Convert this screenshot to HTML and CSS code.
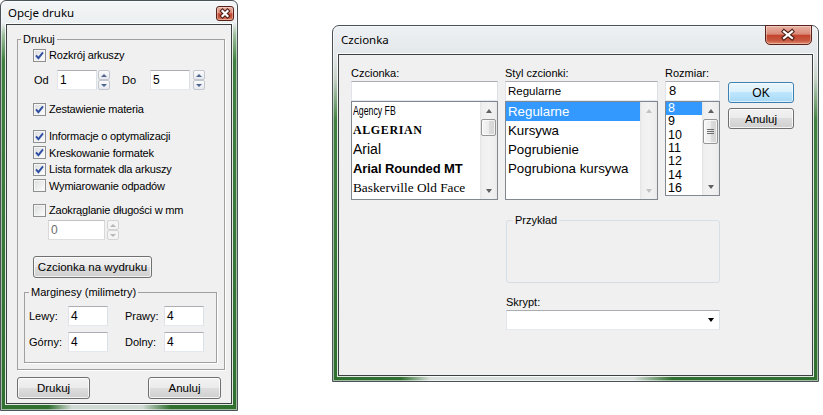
FILE: index.html
```html
<!DOCTYPE html>
<html lang="pl">
<head>
<meta charset="utf-8">
<title>Opcje druku</title>
<link rel="stylesheet" href="styles.css">
</head>
<body>
<div class="desk">

  <section class="win win-print">
    <header class="titlebar">
      <span class="title">Opcje druku</span>
      <span class="close close-sm"><svg width="18" height="15" viewBox="0 0 18 15"><path class="x-out" d="M6.5 5 L11.5 10 M6.5 10 L11.5 5"/><path class="x-in" d="M6.5 5 L11.5 10 M6.5 10 L11.5 5"/></svg></span>
    </header>
    <div class="client pclient">
      <fieldset class="etched g-print">
        <legend>Drukuj</legend>
        <div class="chk"><span class="cb"><svg viewBox="0 0 11 11"><path d="M2 5.4 L4.4 8.2 L9 2.4"/></svg></span>Rozkrój arkuszy</div>
        <div class="range">
          <span class="lbl lbl-od">Od</span>
          <span class="edit e40">1</span>
          <span class="spin"><span class="sp"><i class="up"></i></span><span class="sp"><i class="dn"></i></span></span>
          <span class="lbl lbl-do">Do</span>
          <span class="edit e40">5</span>
          <span class="spin spin2"><span class="sp"><i class="up"></i></span><span class="sp"><i class="dn"></i></span></span>
        </div>
        <div class="chk mt11"><span class="cb"><svg viewBox="0 0 11 11"><path d="M2 5.4 L4.4 8.2 L9 2.4"/></svg></span>Zestawienie materia</div>
        <div class="chk c16 mt11"><span class="cb"><svg viewBox="0 0 11 11"><path d="M2 5.4 L4.4 8.2 L9 2.4"/></svg></span>Informacje o optymalizacji</div>
        <div class="chk c16"><span class="cb"><svg viewBox="0 0 11 11"><path d="M2 5.4 L4.4 8.2 L9 2.4"/></svg></span>Kreskowanie formatek</div>
        <div class="chk c16"><span class="cb"><svg viewBox="0 0 11 11"><path d="M2 5.4 L4.4 8.2 L9 2.4"/></svg></span>Lista formatek dla arkuszy</div>
        <div class="chk c16"><span class="cb"></span>Wymiarowanie odpadów</div>
        <div class="chk mt8"><span class="cb"></span>Zaokrąglanie długości w mm</div>
        <div class="zrow">
          <span class="edit e57 dis">0</span>
          <span class="spin spin-dis"><span class="sp"><i class="up"></i></span><span class="sp"><i class="dn"></i></span></span>
        </div>
        <button class="btn b-font">Czcionka na wydruku</button>
        <fieldset class="etched g-marg">
          <legend>Marginesy (milimetry)</legend>
          <div class="mrow"><span class="mlbl">Lewy:</span><span class="edit e40">4</span><span class="mlbl ml2">Prawy:</span><span class="edit e40">4</span></div>
          <div class="mrow"><span class="mlbl">Górny:</span><span class="edit e40">4</span><span class="mlbl ml2">Dolny:</span><span class="edit e40">4</span></div>
        </fieldset>
      </fieldset>
      <div class="pbtns"><button class="btn b-72">Drukuj</button><button class="btn b-72">Anuluj</button></div>
    </div>
  </section>

  <section class="win win-font">
    <header class="titlebar tb-font">
      <span class="title">Czcionka</span>
      <span class="close close-lg"><svg width="47" height="20" viewBox="0 0 47 20"><path class="x-out" d="M19 6.5 L27 13 M19 13 L27 6.5"/><path class="x-in" d="M19 6.5 L27 13 M19 13 L27 6.5"/></svg></span>
    </header>
    <div class="client fclient">
      <div class="fgrid">
        <div class="col">
          <div class="flbl">Czcionka:</div>
          <div class="edit fe"></div>
          <div class="lb">
            <div class="items font-items">
              <div class="it"><span class="f-agency">Agency FB</span></div>
              <div class="it"><span class="f-alg">ALGERIAN</span></div>
              <div class="it"><span class="f-arial">Arial</span></div>
              <div class="it"><span class="f-arb">Arial Rounded MT</span></div>
              <div class="it"><span class="f-bask">Baskerville Old Face</span></div>
            </div>
            <div class="sb">
              <span class="arr"><i class="up"></i></span>
              <span class="thumb"></span>
              <span class="fill"></span>
              <span class="arr"><i class="dn"></i></span>
            </div>
          </div>
        </div>
        <div class="col">
          <div class="flbl">Styl czcionki:</div>
          <div class="edit fe">Regularne</div>
          <div class="lb">
            <div class="items style-items">
              <div class="it sel">Regularne</div>
              <div class="it">Kursywa</div>
              <div class="it">Pogrubienie</div>
              <div class="it">Pogrubiona kursywa</div>
            </div>
            <div class="sb sb-dis">
              <span class="arr"><i class="up"></i></span>
              <span class="fill"></span>
              <span class="arr"><i class="dn"></i></span>
            </div>
          </div>
        </div>
        <div class="col">
          <div class="flbl">Rozmiar:</div>
          <div class="edit fe fe-size">8</div>
          <div class="lb lb-size">
            <div class="items size-items">
              <div class="it sel">8</div>
              <div class="it">9</div>
              <div class="it">10</div>
              <div class="it">11</div>
              <div class="it">12</div>
              <div class="it">14</div>
              <div class="it">16</div>
            </div>
            <div class="sb">
              <span class="arr"><i class="up"></i></span>
              <span class="thumb thumb-size"><b class="grip"></b></span>
              <span class="fill"></span>
              <span class="arr"><i class="dn"></i></span>
            </div>
          </div>
        </div>
        <div class="bcol">
          <button class="btn ok">OK</button>
          <button class="btn cancel">Anuluj</button>
        </div>
        <fieldset class="sample"><legend>Przykład</legend></fieldset>
        <div class="script">
          <div class="flbl">Skrypt:</div>
          <div class="combo"><i></i></div>
        </div>
      </div>
    </div>
  </section>

</div>
</body>
</html>
```

FILE: styles.css
```css
* { box-sizing: border-box; }
html, body { margin: 0; padding: 0; }
body {
  width: 823px; height: 415px; overflow: hidden;
  background: #fff;
  font-family: "Liberation Sans", Arial, sans-serif;
  font-size: 11px; color: #000;
}
.desk { display: flex; align-items: flex-start; gap: 94px; }

/* ---------- window frame ---------- */
.win {
  display: flex; flex-direction: column; flex: none;
  border: 1px solid #4a5258;
  border-radius: 6px 6px 0 0;
  background:
    linear-gradient(90deg, rgba(226,229,229,0) 14%, rgba(226,229,229,.95) 20%, rgba(226,229,229,.95) 62%, rgba(226,229,229,0) 70%) left bottom / 100% 7px no-repeat,
    linear-gradient(180deg, #eef1f3 0, #e3e7e9 30px, #c8d3c9 52px, #3f7f3f 95px, #2f6f30 100%);
  box-shadow: inset 0 0 0 1px rgba(255,255,255,.55);
}
.win-print {
  width: 238px; height: 411px;
  background:
    linear-gradient(90deg, rgba(226,229,229,0) 20%, rgba(226,229,229,.9) 30%, rgba(226,229,229,.9) 60%, rgba(226,229,229,0) 72%) left bottom / 100% 7px no-repeat,
    linear-gradient(180deg, #f4f6f7 0, #eceff1 22px, #9fbf9f 34px, #3f7f3f 60px, #2f6f30 100%);
}
.win-font { width: 487px; height: 357px; margin-top: 25px; border-radius: 7px 7px 0 0; }

.titlebar { display: flex; justify-content: space-between; align-items: flex-start; flex: none; }
.win-print .titlebar { height: 23px; padding-left: 7px; }
.tb-font { height: 28px; padding-left: 8px; }
.title {
  font-family: "Noto Sans", "Open Sans", sans-serif;
  font-size: 11.5px; line-height: 16px; color: #000;
}
.win-print .title { margin-top: 4px; }
.tb-font .title { margin-top: 6px; }

.close {
  display: block; flex: none;
  border: 1px solid #5a2118;
  background: linear-gradient(180deg, #eab1a2 0%, #d98a78 45%, #c4432c 52%, #c75a43 82%, #e28d6e 100%);
  box-shadow: inset 0 0 0 1px rgba(255,255,255,.35);
}
.close svg { display: block; margin: -1px; }
.close-sm { width: 18px; height: 15px; margin: 5px 3px 0 0; border-radius: 3px; }
.close-lg { width: 47px; height: 20px; margin: -1px 6px 0 0; border-radius: 0 0 5px 5px; }
.x-out { stroke: #4a1c14; stroke-width: 4.2; fill: none; stroke-linecap: square; }
.x-in { stroke: #fff; stroke-width: 2.2; fill: none; stroke-linecap: square; }

.client {
  flex: none; background: #f0f0f0;
  border: 1px solid #3c3f42;
  box-shadow: 0 0 0 1px rgba(255,255,255,.85);
}

/* ---------- print options dialog ---------- */
.pclient { margin: 0 5px; width: 226px; height: 380px; padding: 7px 6px 0 10px; }

fieldset { margin: 0; min-width: 0; }
legend { padding: 0 2px; line-height: 14px; font-size: 11px; }
.etched { border: 1px solid #a0a0a0; box-shadow: 1px 1px 0 #fff; }
.g-print { width: 208px; padding: 1px 0 6px 0; }
.g-print > legend { margin-left: 3px; }

.chk {
  display: flex; align-items: center; height: 16px;
  margin-left: 15px; white-space: nowrap; letter-spacing: -0.2px;
}
.chk.c16 { height: 16.5px; }
.mt11 { margin-top: 11px; }
.mt8 { margin-top: 8px; }
.cb {
  width: 13px; height: 13px; flex: none; margin-right: 3px;
  border: 1px solid #8e8f8f;
  background: linear-gradient(135deg, #d9dbde 0%, #eeeeee 55%, #ffffff 100%);
  box-shadow: inset 0 0 0 1px #f6f6f6;
}
.cb svg { display: block; width: 11px; height: 11px; }
.cb path { fill: none; stroke: #2d4ea3; stroke-width: 1.9; }

.range { display: flex; align-items: center; height: 20px; margin: 7px 0 0 16px; }
.lbl-od { width: 23px; }
.lbl-do { width: 28px; margin-left: 12px; }

.edit {
  display: block; height: 20px; background: #fff;
  border: 1px solid; border-color: #abadb3 #dbdfe6 #e3e9ef #e2e3ea;
  padding-left: 2px; font-size: 12px; line-height: 18px; white-space: nowrap;
}
.e40 { width: 40px; }
.e57 { width: 57px; }
.edit.dis { color: #6d6d6d; border-color: #c3c3c3 #d8d8d8 #dedede #d8d8d8; }

.spin { display: flex; flex-direction: column; width: 12px; height: 20px; margin-left: 1px; flex: none; }
.spin2 { margin-left: 3px; }
.sp {
  flex: 1; display: flex; align-items: center; justify-content: center;
  border: 1px solid #c2c7cf; border-radius: 2px;
  background: linear-gradient(#fbfbfb, #e6e9ee);
}
.sp i { width: 0; height: 0; border-left: 3px solid transparent; border-right: 3px solid transparent; }
.sp i.up { border-bottom: 3px solid #4f6590; }
.sp i.dn { border-top: 3px solid #4f6590; }
.spin-dis { margin-left: 2px; }
.spin-dis .sp { border-color: #d4d4d4; background: #f4f4f4; }
.spin-dis .sp i.up { border-bottom-color: #b8b8b8; }
.spin-dis .sp i.dn { border-top-color: #b8b8b8; }

.zrow { display: flex; height: 20px; margin: 2px 0 0 30px; }

.btn {
  display: block; padding: 0;
  font-family: "Liberation Sans", Arial, sans-serif; font-size: 11.5px; color: #000;
  border: 1px solid #707070; border-radius: 3px;
  background: linear-gradient(#f2f2f2 0, #ebebeb 49%, #dddddd 50%, #cfcfcf 100%);
  box-shadow: inset 0 0 0 1px rgba(255,255,255,.75);
}
.b-font { margin: 16px 0 0 15px; width: 119px; height: 22px; }

.g-marg { margin: 7px 0 0 6px; width: 193px; padding: 7px 0 10px 4px; }
.g-marg > legend { margin-left: 0; }
.mrow { display: flex; align-items: center; height: 20px; }
.mrow + .mrow { margin-top: 6px; }
.mlbl { width: 39px; }
.ml2 { margin-left: 17px; }

.pbtns { display: flex; justify-content: space-between; width: 204px; margin-top: 7px; }
.b-72 { width: 73px; height: 22px; }

/* ---------- font dialog ---------- */
.fclient { margin: 0 5px; width: 475px; height: 322px; padding: 11px 0 0 12px; }
.fgrid {
  display: grid;
  grid-template-columns: 147px 153px 55px 67px;
  column-gap: 7px; align-items: start;
}
.col { display: flex; flex-direction: column; }
.flbl { height: 15px; line-height: 15px; white-space: nowrap; }
.fe { font-size: 11.5px; }
.fe-size { font-size: 13px; padding-left: 3px; }

.lb { display: flex; height: 99px; border: 1px solid #828790; background: #fff; }
.lb-size { height: 95px; }
.items { flex: 1; min-width: 0; overflow: hidden; }
.it { height: 19px; line-height: 19px; padding-left: 1px; white-space: nowrap; }
.sel { background: #3399ff; color: #fff; }
.style-items .it { padding-left: 2px; font-size: 13.3px; }
.size-items .it { height: 13.33px; line-height: 13.33px; font-size: 12.5px; padding-left: 2px; }

.f-agency { display: inline-block; font-size: 12.5px; transform: scaleX(.7); transform-origin: 0 50%; }
.f-alg { font-family: "Liberation Serif", "Times New Roman", serif; font-weight: bold; font-size: 12px; letter-spacing: .6px; }
.f-arial { font-size: 14px; }
.f-arb { font-weight: bold; font-size: 13px; letter-spacing: -0.1px; }
.f-bask { font-family: "Liberation Serif", "Times New Roman", serif; font-size: 13.3px; }

.sb {
  width: 17px; flex: none; display: flex; flex-direction: column;
  background: linear-gradient(90deg, #e3e3e3 0, #efefef 2px, #f2f2f2 50%, #eeeeee 15px, #e6e6e6 100%);
}
.arr { height: 17px; flex: none; display: flex; align-items: center; justify-content: center; }
.arr i { width: 0; height: 0; border-left: 3.5px solid transparent; border-right: 3.5px solid transparent; }
.arr i.up { border-bottom: 4px solid #606060; }
.arr i.dn { border-top: 4px solid #606060; }
.sb-dis .arr i.up { border-bottom-color: #c2c2c2; }
.sb-dis .arr i.dn { border-top-color: #c2c2c2; }
.fill { flex: 1; }
.thumb {
  display: flex; align-items: center; justify-content: center;
  height: 17px; flex: none; margin-left: 1px; width: 15px;
  border: 1px solid #959595; border-radius: 2px;
  background: linear-gradient(90deg, #f6f6f6 0, #ececec 50%, #dcdcdc 51%, #d4d4d4 100%);
  box-shadow: inset 0 0 0 1px rgba(255,255,255,.7);
}
.thumb-size { height: 25px; margin-top: 0; }
.grip {
  display: block; width: 7px; height: 5px;
  background: linear-gradient(#6e6e6e 0 1px, transparent 1px 2px, #6e6e6e 2px 3px, transparent 3px 4px, #6e6e6e 4px 5px);
}

.bcol { display: flex; flex-direction: column; gap: 5px; padding-top: 16px; margin-left: 1px; width: 66px; }
.ok, .cancel { width: 66px; height: 21px; }
.ok { font-size: 12px;
  border-color: #3c7fb1;
  background: linear-gradient(#eaf6fd 0, #d9f0fc 49%, #bee6fd 50%, #a7d9f5 100%);
  box-shadow: inset 0 0 0 1px rgba(255,255,255,.6);
}

.sample {
  grid-column: 2 / 4; margin: 13px 0 0 1px; width: 214px; height: 70px;
  border: 1px solid #d5dfe5; border-radius: 3px; padding: 0;
}
.sample > legend { margin-left: 6px; }

.script { grid-column: 2 / 4; margin: 12px 0 0 1px; width: 214px; }
.combo {
  height: 20px; background: #fff;
  border: 1px solid; border-color: #abadb3 #dbdfe6 #e3e9ef #e2e3ea;
  display: flex; align-items: center; justify-content: flex-end; padding-right: 5px;
}
.combo i { width: 0; height: 0; border-left: 3.5px solid transparent; border-right: 3.5px solid transparent; border-top: 4px solid #000; }
```
